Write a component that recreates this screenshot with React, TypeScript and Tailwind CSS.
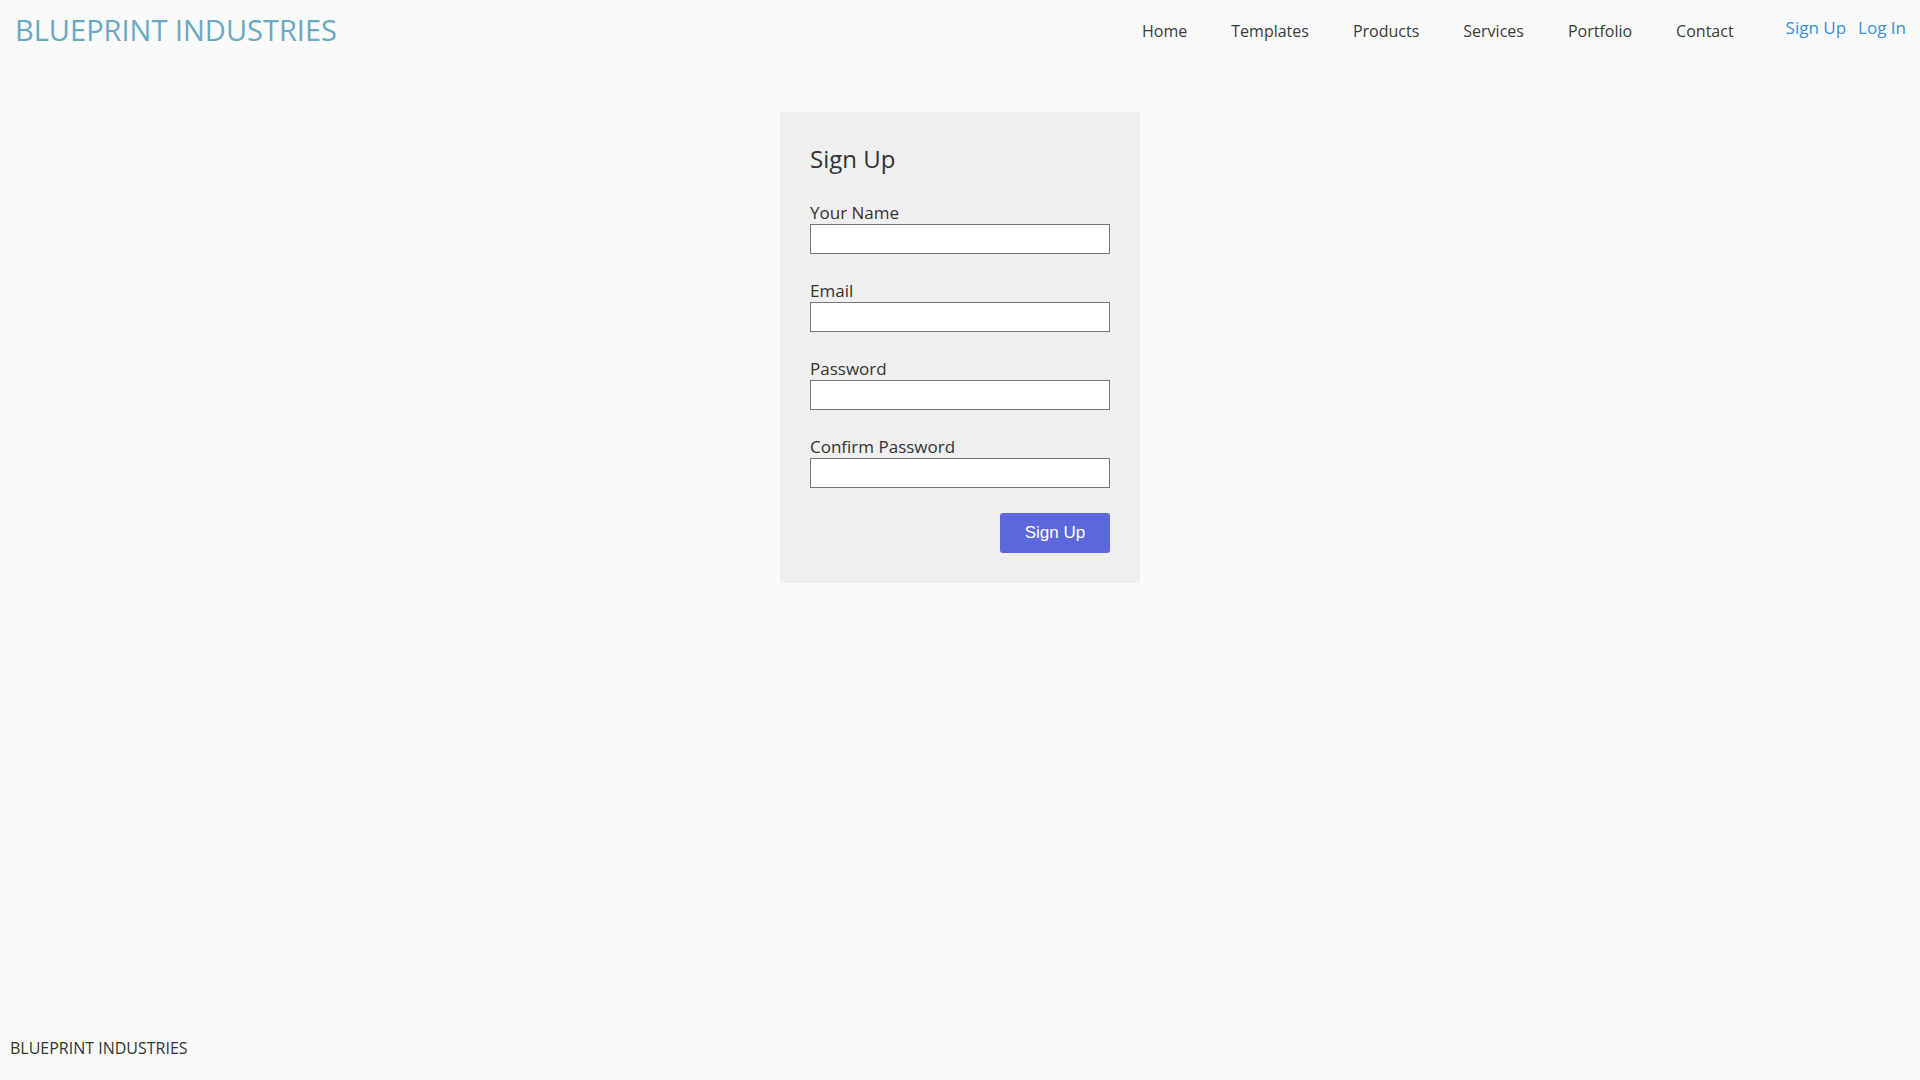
import React from "react";

const navItems = ["Home", "Templates", "Products", "Services", "Portfolio", "Contact"];
const fields = ["Your Name", "Email", "Password", "Confirm Password"];

export default function App() {
  return (
    <div
      className="min-h-screen flex flex-col bg-[#fafafa] text-[#333333]"
      style={{ fontFamily: '"Open Sans", "Noto Sans", sans-serif' }}
    >
      <header className="flex items-start justify-between pl-[15px] pr-[14px]">
        <div className="pt-[10px] text-[29px] leading-[39px] text-[#6aa9c2]">BLUEPRINT INDUSTRIES</div>
        <div className="flex items-start">
          <nav className="flex gap-[44px] pt-[20px] text-[16px] leading-[22px] text-[#3a3a3a]">
            {navItems.map((n) => (
              <a key={n} href="#" className="block">
                {n}
              </a>
            ))}
          </nav>
          <div className="ml-[52px] flex gap-[12px] pt-[16px] text-[17px] leading-[23px] text-[#3a8fdb]">
            <a href="#">Sign Up</a>
            <a href="#">Log In</a>
          </div>
        </div>
      </header>

      <main className="flex-1 flex justify-center pt-[63px]">
        <div className="w-[360px] self-start bg-[#efefef] px-[30px] pt-[30px] pb-[30px] rounded-[2px]">
          <h1 className="text-[24px] leading-[33px] text-[#333333]">Sign Up</h1>
          <div className="mt-[26px] flex flex-col gap-[25px]">
            {fields.map((f) => (
              <label key={f} className="flex flex-col">
                <span className="text-[17px] leading-[23px] text-[#333333]">{f}</span>
                <input
                  type={f.includes("Password") ? "password" : f === "Email" ? "email" : "text"}
                  className="h-[30px] w-[300px] border border-[#767676] bg-white"
                />
              </label>
            ))}
          </div>
          <div className="mt-[25px] flex justify-end">
            <button
              className="h-[40px] w-[110px] rounded-[3px] bg-[#5c67dc] text-[17px] text-white"
              style={{ fontFamily: '"Liberation Sans", Arial, sans-serif' }}
            >
              Sign Up
            </button>
          </div>
        </div>
      </main>

      <footer className="px-[10px] pb-[21px] text-[16px] leading-[22px] text-[#333333]">BLUEPRINT INDUSTRIES</footer>
    </div>
  );
}
